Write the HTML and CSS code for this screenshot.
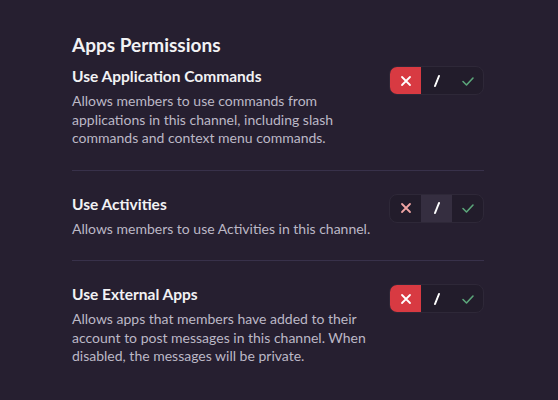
FILE: index.html
```html
<!DOCTYPE html>
<html>
<head>
<meta charset="utf-8">
<link rel="stylesheet" href="styles.css">
</head>
<body>
<div class="page">
  <h2 class="title">Apps Permissions</h2>

  <div class="row">
    <div class="info">
      <div class="name">Use Application Commands</div>
      <div class="desc">Allows members to use commands from applications in this channel, including slash commands and context menu commands.</div>
    </div>
    <div class="toggle">
      <div class="seg deny on"><svg viewBox="0 0 12 12" width="12" height="12"><path d="M2 2L10 10M10 2L2 10" stroke="currentColor" stroke-width="1.8" stroke-linecap="round"/></svg></div>
      <div class="seg neutral"><svg viewBox="0 0 12 14" width="12" height="14"><path d="M8 2L4 12" stroke="currentColor" stroke-width="2" stroke-linecap="round"/></svg></div>
      <div class="seg allow"><svg viewBox="0 0 14 12" width="14" height="12"><path d="M2 6.5L5.5 10L12 3" fill="none" stroke="currentColor" stroke-width="1.6" stroke-linecap="round" stroke-linejoin="round"/></svg></div>
    </div>
  </div>
  <div class="divider"></div>

  <div class="row">
    <div class="info">
      <div class="name">Use Activities</div>
      <div class="desc">Allows members to use Activities in this channel.</div>
    </div>
    <div class="toggle">
      <div class="seg deny"><svg viewBox="0 0 12 12" width="12" height="12"><path d="M2 2L10 10M10 2L2 10" stroke="currentColor" stroke-width="1.8" stroke-linecap="round"/></svg></div>
      <div class="seg neutral on"><svg viewBox="0 0 12 14" width="12" height="14"><path d="M8 2L4 12" stroke="currentColor" stroke-width="2" stroke-linecap="round"/></svg></div>
      <div class="seg allow"><svg viewBox="0 0 14 12" width="14" height="12"><path d="M2 6.5L5.5 10L12 3" fill="none" stroke="currentColor" stroke-width="1.6" stroke-linecap="round" stroke-linejoin="round"/></svg></div>
    </div>
  </div>
  <div class="divider"></div>

  <div class="row">
    <div class="info">
      <div class="name">Use External Apps</div>
      <div class="desc">Allows apps that members have added to their account to post messages in this channel. When disabled, the messages will be private.</div>
    </div>
    <div class="toggle">
      <div class="seg deny on"><svg viewBox="0 0 12 12" width="12" height="12"><path d="M2 2L10 10M10 2L2 10" stroke="currentColor" stroke-width="1.8" stroke-linecap="round"/></svg></div>
      <div class="seg neutral"><svg viewBox="0 0 12 14" width="12" height="14"><path d="M8 2L4 12" stroke="currentColor" stroke-width="2" stroke-linecap="round"/></svg></div>
      <div class="seg allow"><svg viewBox="0 0 14 12" width="14" height="12"><path d="M2 6.5L5.5 10L12 3" fill="none" stroke="currentColor" stroke-width="1.6" stroke-linecap="round" stroke-linejoin="round"/></svg></div>
    </div>
  </div>
</div>
</body>
</html>
```

FILE: styles.css
```css
html, body {
  margin: 0;
  padding: 0;
  background: #261f30;
  height: 100%;
  overflow: hidden;
}
.page {
  padding: 32px 74px 0 72px;
  font-family: Lato, "Noto Sans", sans-serif;
}
.title {
  margin: 0 0 8px 0;
  font-size: 19px;
  line-height: 26px;
  font-weight: 700;
  color: #f2f2f4;
}
.row {
  display: flex;
  justify-content: space-between;
  align-items: flex-start;
  gap: 16px;
}
.info {
  flex: 1;
}
.name {
  font-size: 15.5px;
  line-height: 20px;
  font-weight: 700;
  color: #f2f2f4;
  margin-bottom: 6px;
}
.desc {
  font-size: 14px;
  line-height: 18.5px;
  color: #bcb8c6;
  max-width: 310px;
}
.toggle {
  display: flex;
  border: 1px solid #2e2838;
  border-radius: 8px;
  background: #221c2b;
  overflow: hidden;
}
.seg {
  width: 31px;
  height: 27px;
  display: flex;
  align-items: center;
  justify-content: center;
}
.deny { color: #f0a4a4; }
.deny.on { background: #d83a42; color: #ffffff; }
.neutral { color: #ffffff; }
.neutral.on { background: #352e40; }
.allow { color: #5ba57a; }
.divider {
  height: 1px;
  background: #38314a;
  margin: 22px 0 23px 0;
}
```
